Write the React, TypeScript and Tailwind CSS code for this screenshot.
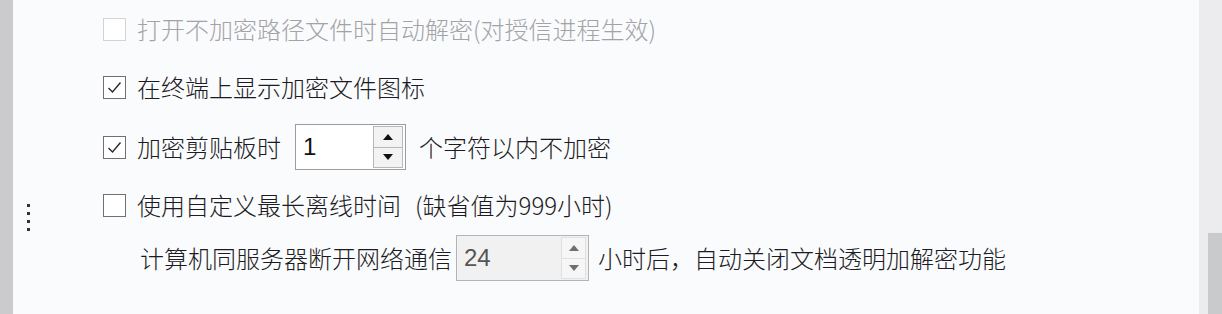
import React from 'react';

const font = { fontFamily: '"Noto Sans CJK SC", "Noto Sans", sans-serif' };

function CheckBox({ checked, disabled }: { checked?: boolean; disabled?: boolean }) {
  return (
    <div
      className={`w-[23px] h-[23px] shrink-0 border flex items-center justify-center bg-white ${
        disabled ? 'border-[#d4d4d6]' : 'border-[#707070]'
      }`}
    >
      {checked && (
        <svg width="17" height="17" viewBox="0 0 17 17" fill="none">
          <path d="M2.5 9 L6.5 13 L14.5 3.5" stroke="#2a2a2a" strokeWidth="1.4" />
        </svg>
      )}
    </div>
  );
}

function SpinBox({ value, width, disabled }: { value: string; width: string; disabled?: boolean }) {
  const tri = disabled ? '#6f6f6f' : '#111';
  return (
    <div
      className={`${width} h-[46px] border flex items-center shrink-0 ${
        disabled ? 'bg-[#f1f1f1] border-[#b4b4b4]' : 'bg-white border-[#9c9c9c]'
      }`}
    >
      <span
        className={`flex-1 pl-[7px] text-[24px] leading-none ${disabled ? 'text-[#555]' : 'text-[#111]'}`}
        style={{ fontFamily: '"Liberation Sans", Arial, sans-serif' }}
      >
        {value}
      </span>
      <div className={`flex flex-col h-[42px] mr-[2px] ${disabled ? 'w-[25px]' : 'w-[30px]'}`}>
        <div
          className={`flex-1 flex items-center justify-center border ${
            disabled ? 'border-[#e0e0e0] bg-[#f6f6f6]' : 'border-[#b8b8b8] bg-[#f3f3f3]'
          }`}
        >
          <svg width="10" height="6" viewBox="0 0 10 6">
            <path d="M0 6 L5 0 L10 6 Z" fill={tri} />
          </svg>
        </div>
        <div
          className={`flex-1 flex items-center justify-center border border-t-0 ${
            disabled ? 'border-[#e0e0e0] bg-[#f6f6f6]' : 'border-[#b8b8b8] bg-[#f3f3f3]'
          }`}
        >
          <svg width="10" height="6" viewBox="0 0 10 6">
            <path d="M0 0 L10 0 L5 6 Z" fill={tri} />
          </svg>
        </div>
      </div>
    </div>
  );
}

export default function App() {
  return (
    <div className="w-[1222px] h-[314px] flex bg-[#fafbfd] overflow-hidden" style={font}>
      {/* left frame edge */}
      <div className="w-[13px] h-full bg-[#cbcbcd] shrink-0" />

      {/* splitter grip */}
      <div className="w-[90px] shrink-0 pt-[204px] pl-[14px] flex flex-col gap-[5px]">
        {[0, 1, 2, 3].map((i) => (
          <div key={i} className="w-[3px] h-[3px] bg-[#333]" />
        ))}
      </div>

      {/* options */}
      <div className="flex-1 flex flex-col text-[24px] font-light text-[#1c1a22]">
        <div className="h-[58px] flex items-center gap-[11px]">
          <CheckBox disabled />
          <span className="text-[#a3a3a6]">打开不加密路径文件时自动解密(对授信进程生效)</span>
        </div>

        <div className="h-[58px] flex items-center gap-[11px]">
          <CheckBox checked />
          <span>在终端上显示加密文件图标</span>
        </div>

        <div className="h-[62px] flex items-center gap-[11px]">
          <CheckBox checked />
          <span>加密剪贴板时</span>
          <div className="ml-[3px] mr-[2px]">
            <SpinBox value="1" width="w-[111px]" />
          </div>
          <span>个字符以内不加密</span>
        </div>

        <div className="h-[54px] flex items-center gap-[11px]">
          <CheckBox />
          <span>
            使用自定义最长离线时间<span className="ml-[14px]">(缺省值为999小时)</span>
          </span>
        </div>

        <div className="h-[52px] flex items-center pl-[37px]">
          <span>计算机同服务器断开网络通信</span>
          <div className="ml-[4px] mr-[9px]">
            <SpinBox value="24" width="w-[133px]" disabled />
          </div>
          <span>小时后，自动关闭文档透明加解密功能</span>
        </div>
      </div>

      {/* scrollbar */}
      <div className="w-[23px] h-full shrink-0 bg-[#ececee] flex flex-col items-end pt-[233px]">
        <div className="w-[14px] flex-1 bg-[#c9cacc]" />
      </div>
    </div>
  );
}
